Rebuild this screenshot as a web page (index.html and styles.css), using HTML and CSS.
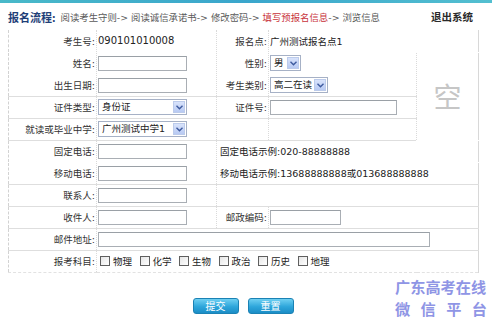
FILE: index.html
```html
<!DOCTYPE html>
<html lang="zh">
<head>
<meta charset="utf-8">
<link rel="stylesheet" href="styles.css">
</head>
<body>
<div class="topbar"></div>
<div class="header">
  <div class="flow"><span class="flow-title">报名流程:</span><span class="steps">阅读考生守则-&gt; 阅读诚信承诺书-&gt; 修改密码-&gt; <span class="cur">填写预报名信息</span>-&gt; 浏览信息</span></div>
  <a class="logout">退出系统</a>
</div>
<table class="form">
  <colgroup><col class="c1"><col class="c2"><col class="c3"><col class="c4"><col class="c5"></colgroup>
  <tr class="nl">
    <td class="lb">考生号:</td><td class="val num">090101010008</td>
    <td class="lb">报名点:</td><td class="val" colspan="2">广州测试报名点1</td>
  </tr>
  <tr class="nl">
    <td class="lb">姓名:</td><td class="val"><input class="inp w89"></td>
    <td class="lb">性别:</td><td class="val"><span class="sel w31"><span class="st">男</span><span class="sa"><svg width="7" height="5" viewBox="0 0 7 5"><path d="M0.5 0.8 L3.5 3.8 L6.5 0.8" fill="none" stroke="#3d5a9e" stroke-width="1.4"/></svg></span></span></td>
    <td class="photo" rowspan="4">空</td>
  </tr>
  <tr>
    <td class="lb">出生日期:</td><td class="val"><input class="inp w89"></td>
    <td class="lb">考生类别:</td><td class="val"><span class="sel w58"><span class="st">高二在读</span><span class="sa"><svg width="7" height="5" viewBox="0 0 7 5"><path d="M0.5 0.8 L3.5 3.8 L6.5 0.8" fill="none" stroke="#3d5a9e" stroke-width="1.4"/></svg></span></span></td>
  </tr>
  <tr>
    <td class="lb">证件类型:</td><td class="val"><span class="sel w89"><span class="st">身份证</span><span class="sa"><svg width="7" height="5" viewBox="0 0 7 5"><path d="M0.5 0.8 L3.5 3.8 L6.5 0.8" fill="none" stroke="#3d5a9e" stroke-width="1.4"/></svg></span></span></td>
    <td class="lb">证件号:</td><td class="val"><input class="inp w127"></td>
  </tr>
  <tr>
    <td class="lb">就读或毕业中学:</td><td class="val"><span class="sel w89"><span class="st">广州测试中学1</span><span class="sa"><svg width="7" height="5" viewBox="0 0 7 5"><path d="M0.5 0.8 L3.5 3.8 L6.5 0.8" fill="none" stroke="#3d5a9e" stroke-width="1.4"/></svg></span></span></td>
    <td class="lb"></td><td class="val"></td>
  </tr>
  <tr class="nl">
    <td class="lb">固定电话:</td><td class="val"><input class="inp w89"></td>
    <td class="val note" colspan="3">固定电话示例:020-88888888</td>
  </tr>
  <tr>
    <td class="lb">移动电话:</td><td class="val"><input class="inp w89"></td>
    <td class="val note" colspan="3">移动电话示例:13688888888或013688888888</td>
  </tr>
  <tr>
    <td class="lb">联系人:</td><td class="val"><input class="inp w89"></td>
    <td class="val" colspan="3"></td>
  </tr>
  <tr>
    <td class="lb">收件人:</td><td class="val"><input class="inp w89"></td>
    <td class="lb">邮政编码:</td><td class="val" colspan="2"><input class="inp w71"></td>
  </tr>
  <tr>
    <td class="lb">邮件地址:</td><td class="val" colspan="4"><input class="inp w332"></td>
  </tr>
  <tr class="last">
    <td class="lb">报考科目:</td>
    <td class="val" colspan="4">
      <div class="subjects">
        <label class="subj"><span class="cb"></span>物理</label>
        <label class="subj"><span class="cb"></span>化学</label>
        <label class="subj"><span class="cb"></span>生物</label>
        <label class="subj"><span class="cb"></span>政治</label>
        <label class="subj"><span class="cb"></span>历史</label>
        <label class="subj"><span class="cb"></span>地理</label>
      </div>
    </td>
  </tr>
</table>
<div class="buttons">
  <span class="btn">提交</span>
  <span class="btn">重置</span>
</div>
<div class="watermark">
  <div class="wm1">广东高考在线</div>
  <div class="wm2"><span>微</span><span>信</span><span>平</span><span>台</span></div>
</div>
</body>
</html>
```
FILE: styles.css
```css
html, body {
  margin: 0;
  padding: 0;
  background: #fff;
}
body {
  width: 492px;
  height: 322px;
  overflow: hidden;
  position: relative;
  font-family: "DejaVu Sans", "Noto Sans CJK SC", sans-serif;
  font-size: 9.5px;
  color: #222;
}
.topbar {
  height: 3px;
  background: linear-gradient(to right, #49b9c9, #3aa6cc 50%, #53bfd0);
}
.header {
  height: 27px;
  display: flex;
  align-items: center;
  justify-content: space-between;
  padding: 0 19px 0 8px;
  box-sizing: border-box;
}
.flow {
  display: flex;
  align-items: center;
}
.flow-title {
  font-family: "Noto Sans CJK SC", sans-serif;
  font-weight: bold;
  font-size: 11px;
  color: #1f3f78;
  margin-right: 5px;
}
.steps {
  font-size: 9.4px;
  color: #5a5a5a;
}
.steps .cur {
  color: #c8333b;
}
.logout {
  font-family: "Noto Sans CJK SC", sans-serif;
  font-weight: bold;
  font-size: 10.5px;
  color: #2a2a2a;
}
.form {
  margin-left: 8px;
  border-collapse: collapse;
  table-layout: fixed;
  width: 471px;
  border-left: 1px dashed #d2d2d2;
  border-right: 1px solid #d8d8d8;
}
.c1 { width: 88px; }
.c2 { width: 120px; }
.c3 { width: 52px; }
.c4 { width: 148px; }
.c5 { width: 62px; }
.form td {
  height: 22px;
  padding: 0;
  box-sizing: border-box;
  border-bottom: 1px solid #dedede;
  border-right: 1px dotted #dadada;
  vertical-align: middle;
  white-space: nowrap;
}
.form tr.nl td {
  border-bottom-color: transparent;
}
.form tr.last td {
  border-bottom: 1px dashed #e2e2e2;
}
.form td.lb {
  text-align: right;
  padding-right: 1px;
  color: #333;
}
.form td.val {
  padding-left: 1px;
}
.form td.num {
  font-size: 10px;
}
.form td.note {
  padding-left: 3px;
}
.form td.photo {
  text-align: center;
  font-family: "Noto Sans CJK SC", sans-serif;
  font-size: 28px;
  color: #c6c6c6;
  border-bottom: 1px solid #dedede;
}
.inp {
  display: block;
  height: 15px;
  box-sizing: border-box;
  border: 1px solid #a9aeb4;
  border-top-color: #9aa0a6;
  background: #fff;
  padding: 0;
  margin: 0;
  outline: none;
}
.w89 { width: 89px; }
.w127 { width: 127px; }
.w71 { width: 71px; }
.w332 { width: 332px; }
.w31 { width: 31px; }
.w58 { width: 58px; }
.sel {
  display: flex;
  align-items: center;
  justify-content: space-between;
  height: 16px;
  box-sizing: border-box;
  border: 1px solid #a6b1c6;
  background: #fff;
  padding: 1px 1px 1px 3px;
}
.sel .st {
  line-height: 12px;
}
.sel .sa {
  width: 12px;
  height: 12px;
  box-sizing: border-box;
  background: linear-gradient(#d8e3fb, #b8caf3);
  border: 1px solid #bccbeb;
  display: flex;
  align-items: center;
  justify-content: center;
}
.subjects {
  display: flex;
  padding-left: 2px;
}
.subj {
  display: flex;
  align-items: center;
  width: 39.5px;
}
.cb {
  width: 10px;
  height: 10px;
  box-sizing: border-box;
  border: 1px solid #5f5f5f;
  background: linear-gradient(135deg, #e6e6e6, #fff);
  margin-right: 3px;
}
.buttons {
  display: flex;
  justify-content: center;
  gap: 9px;
  margin-top: 25px;
  padding-right: 6px;
}
.btn {
  width: 46px;
  height: 16px;
  box-sizing: border-box;
  border: 1px solid #1b82b4;
  border-radius: 3px;
  background: linear-gradient(#6fd0f2, #2ea6db 55%, #1b8dc6);
  color: #fff;
  font-family: "Noto Sans CJK SC", sans-serif;
  font-size: 10px;
  line-height: 14px;
  text-align: center;
}
.watermark {
  position: absolute;
  left: 395px;
  top: 276px;
  width: 92px;
  font-family: "Noto Sans CJK SC", sans-serif;
  font-weight: bold;
  color: #8f95e5;
}
.wm1 {
  font-size: 15.2px;
  line-height: 21px;
  white-space: nowrap;
}
.wm2 {
  display: flex;
  justify-content: space-between;
  font-size: 15.2px;
  line-height: 22px;
}
```
